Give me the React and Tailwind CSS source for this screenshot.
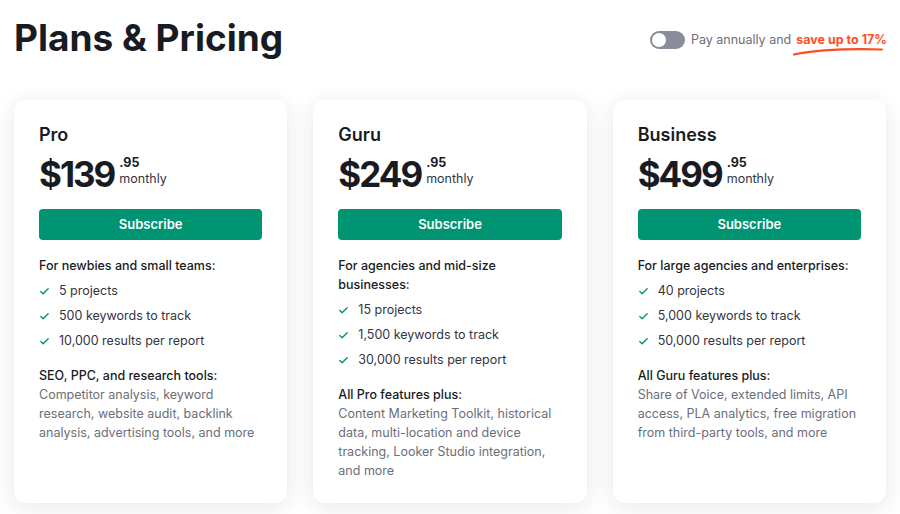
import { Check } from 'lucide-react';

const plans = [
    {
        name: 'Pro',
        price: '$139',
        intro: 'For newbies and small teams:',
        items: ['5 projects', '500 keywords to track', '10,000 results per report'],
        toolsTitle: 'SEO, PPC, and research tools:',
        tools: 'Competitor analysis, keyword research, website audit, backlink analysis, advertising tools, and more',
    },
    {
        name: 'Guru',
        price: '$249',
        intro: 'For agencies and mid-size businesses:',
        items: ['15 projects', '1,500 keywords to track', '30,000 results per report'],
        toolsTitle: 'All Pro features plus:',
        tools: 'Content Marketing Toolkit, historical data, multi-location and device tracking, Looker Studio integration, and more',
    },
    {
        name: 'Business',
        price: '$499',
        intro: 'For large agencies and enterprises:',
        items: ['40 projects', '5,000 keywords to track', '50,000 results per report'],
        toolsTitle: 'All Guru features plus:',
        tools: 'Share of Voice, extended limits, API access, PLA analytics, free migration from third-party tools, and more',
    },
];

function PlanCard({ plan }) {
    return (
        <div className="bg-white rounded-xl shadow-[0_4px_22px_rgba(40,40,70,0.11)] px-[25px] pt-[24px] h-[403px]">
            <h2 className="text-[18px] font-semibold text-[#191b23] leading-[22px]">{plan.name}</h2>

            {/* Price */}
            <div className="flex items-start mt-[9px]">
                <span className="text-[35px] font-bold text-[#191b23] leading-[38px] tracking-[-2px]">{plan.price}</span>
                <div className="ml-[5px] mt-[1px] flex flex-col">
                    <span className="text-[12.5px] font-bold text-[#191b23] leading-[14px]">.95</span>
                    <span className="text-[12.5px] text-[#33353f] leading-[16px] mt-[1px]">monthly</span>
                </div>
            </div>

            <button className="w-full h-[31px] mt-[16px] rounded-[4px] bg-[#009473] text-white text-[13px] font-semibold">
                Subscribe
            </button>

            <p className="text-[12.5px] font-medium text-[#191b23] leading-[19px] mt-[16px]">{plan.intro}</p>
            <ul className="mt-[4px]">
                {plan.items.map((item) => (
                    <li key={item} className="flex items-center gap-[9px] h-[25px] text-[12.5px] text-[#33353f]">
                        <Check className="w-[11px] h-[11px] text-[#009473]" strokeWidth={3} />
                        {item}
                    </li>
                ))}
            </ul>

            <p className="text-[12.5px] font-medium text-[#191b23] leading-[19px] mt-[12px]">{plan.toolsTitle}</p>
            <p className="text-[12.5px] text-[#6c6e79] leading-[19px]">{plan.tools}</p>
        </div>
    );
}

export default function App() {
    return (
        <div className="w-[900px] h-[514px] bg-white overflow-hidden font-['Inter',sans-serif]">
            {/* Header */}
            <div className="flex items-start justify-between pl-[14px] pr-[14px] pt-[14px]">
                <h1 className="text-[37px] font-bold text-[#191b23] leading-[48px]">Plans &amp; Pricing</h1>

                <div className="flex items-center mt-[17px] -mr-[1px]">
                    <div className="w-[35px] h-[18px] rounded-full bg-[#8a8d99] p-[2px] flex items-center">
                        <div className="w-[14px] h-[14px] rounded-full bg-white" />
                    </div>
                    <span className="ml-[6px] text-[12.5px] text-[#6c6e79]">Pay annually and</span>
                    <span className="relative ml-[5px] text-[12.5px] font-bold text-[#ff4d1f]">
                        save up to 17%
                        <svg className="absolute left-[-4px] top-[16px]" width="92" height="9" viewBox="0 0 92 9" fill="none">
                            <path d="M2 7.5 C 25 3, 55 1.5, 90 2.5" stroke="#ff4d1f" strokeWidth="2.2" strokeLinecap="round" />
                        </svg>
                    </span>
                </div>
            </div>

            {/* Cards */}
            <div className="grid grid-cols-3 gap-[26px] px-[14px] mt-[38px]">
                {plans.map((plan) => (
                    <PlanCard key={plan.name} plan={plan} />
                ))}
            </div>
        </div>
    );
}
